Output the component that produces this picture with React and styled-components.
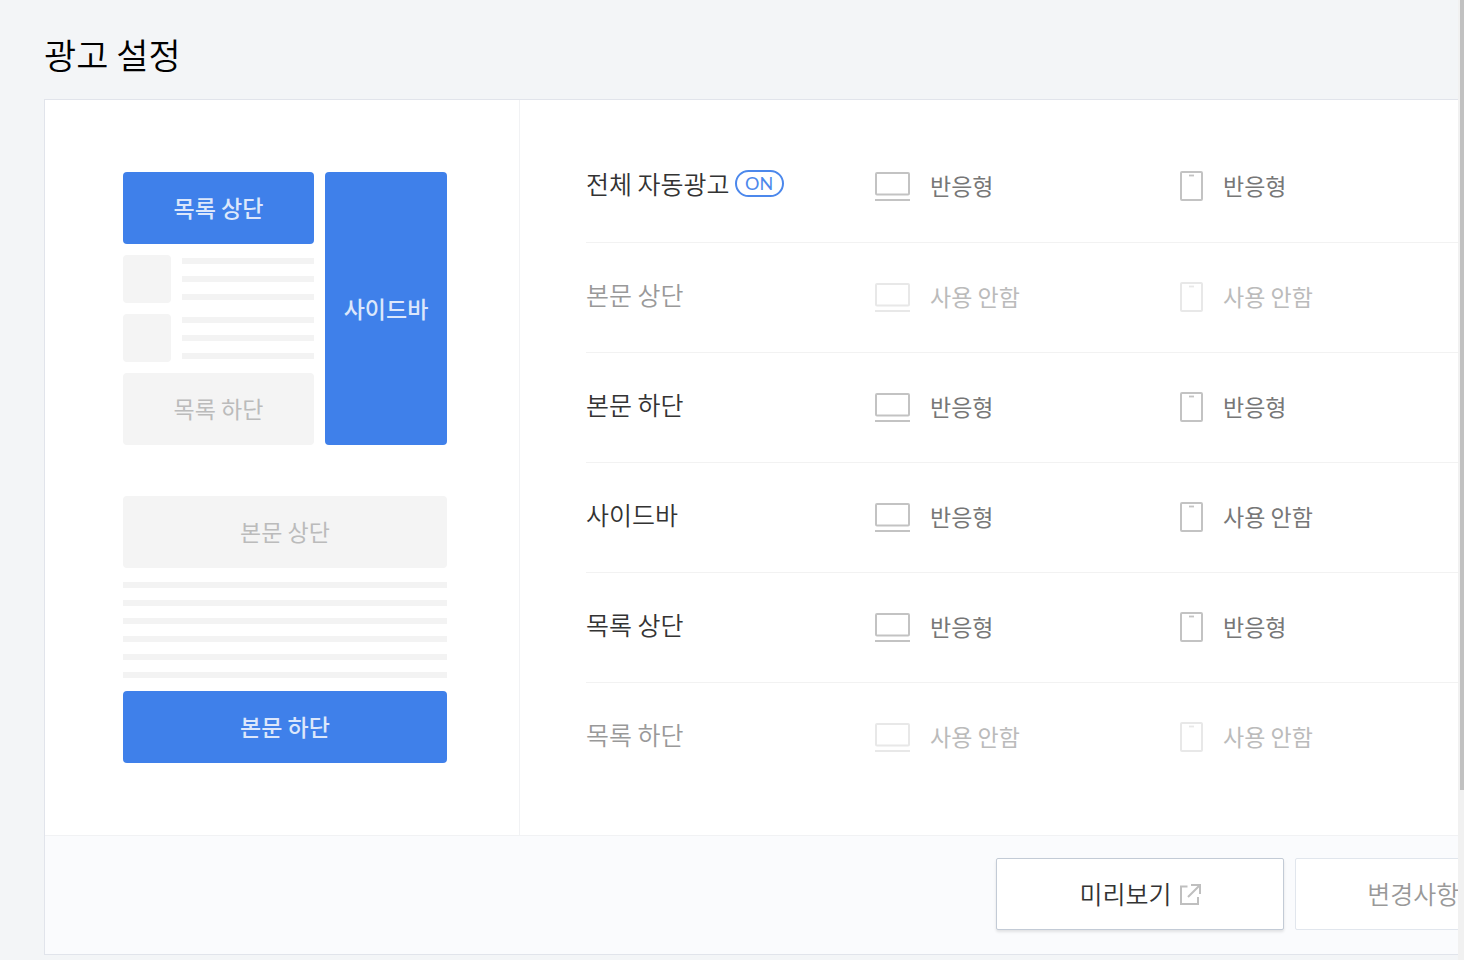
import React from "react";
import styled, { createGlobalStyle } from "styled-components";

const GlobalStyle = createGlobalStyle`
  *, *::before, *::after { box-sizing: border-box; }
  body {
    margin: 0;
    background: #f3f5f7;
    color: #000;
    font-family: "Noto Sans CJK KR", "Noto Sans", sans-serif;
    font-size: 23px;
  }
  button { font: inherit; }
`;

const Page = styled.div`
  display: flex;
  min-height: 100vh;
`;

const Main = styled.main`
  flex: 1;
  min-width: 0;
  overflow: hidden;
  padding: 28px 0 5px 44px;
`;

const ScrollTrack = styled.div`
  flex: none;
  width: 6px;
  padding-left: 2px;
  background: #f1f1f1;
`;

const ScrollThumb = styled.div`
  height: 790px;
  background: #c1c1c1;
`;

const Title = styled.h1`
  margin: 0 0 19px;
  font-size: 35px;
  font-weight: 350;
  line-height: 52px;
`;

/* The card runs on past the right edge of the visible area. */
const Card = styled.section`
  margin-right: -150px;
  border: 1px solid #e1e4eb;
  background: #fff;
`;

const CardBody = styled.div`
  display: flex;
`;

const Preview = styled.div`
  flex: none;
  display: flex;
  flex-direction: column;
  gap: 51px;
  padding: 72px 72px 72px 78px;
  border-right: 1px solid #f1f2f4;
`;

const ListLayout = styled.div`
  display: grid;
  grid-template-columns: 191px 122px;
  gap: 11px;
`;

const Stack = styled.div`
  display: flex;
  flex-direction: column;
  gap: ${(p) => p.$gap}px;
`;

const Slot = styled.div`
  display: flex;
  align-items: center;
  justify-content: center;
  min-height: 72px;
  padding-bottom: 2px;
  border-radius: 4px;
  line-height: 34px;
  background: ${(p) => (p.$on ? "#3f80ea" : "#f4f4f4")};
  color: ${(p) => (p.$on ? "#dce7fb" : "#bbb")};
  font-weight: ${(p) => (p.$on ? 500 : 400)};
`;

const Post = styled.div`
  display: grid;
  grid-template-columns: 48px 1fr;
  gap: 11px;
`;

const Thumb = styled.div`
  height: 48px;
  border-radius: 4px;
  background: #f4f4f4;
`;

const Lines = styled.div`
  display: flex;
  flex-direction: column;
  gap: 12px;
  padding: ${(p) => p.$pad};
`;

const Line = styled.div`
  height: 6px;
  background: #f3f3f3;
`;

const Settings = styled.div`
  flex: 1;
  min-width: 0;
  padding: 32px 0 0 66px;
`;

const Table = styled.table`
  width: 100%;
  table-layout: fixed;
  border-collapse: separate;
  border-spacing: 0;
`;

const Row = styled.tr`
  & > * {
    height: 110px;
    padding: 33px 0 0;
    border-bottom: 1px solid #f2f2f2;
    vertical-align: top;
    text-align: left;
  }
  &:first-child > * { height: 111px; }
  &:last-child > * { border-bottom: 0; }
`;

const NameCell = styled.th`
  width: 289px;
  color: ${(p) => (p.$off ? "#999" : "#333")};
  font-size: 25px;
  font-weight: 350;
  line-height: 36px;
`;

const Name = styled.div`
  display: flex;
  align-items: center;
  gap: 5px;
`;

const DeviceCell = styled.td`
  width: ${(p) => p.$width || "auto"};
`;

const Device = styled.div`
  display: flex;
  align-items: center;
  gap: 20px;
  line-height: 40px;
  color: ${(p) => (p.$off ? "#bbb" : "#777")};

  svg {
    margin-top: 2px;
    color: ${(p) => (p.$off ? "#e8e8e8" : "#c3c3c3")};
  }
`;

const Badge = styled.span`
  width: 49px;
  height: 27px;
  border: 2px solid #4c88ec;
  border-radius: 14px;
  color: #4c88ec;
  font-family: Lato, sans-serif;
  font-size: 18px;
  font-weight: 400;
  line-height: 23px;
  text-align: center;
`;

const Footer = styled.footer`
  display: flex;
  justify-content: flex-end;
  gap: 11px;
  padding: 22px 24px 24px;
  border-top: 1px solid #f1f2f4;
  background: #fafbfd;
`;

const Button = styled.button`
  display: flex;
  align-items: center;
  justify-content: center;
  gap: 8px;
  width: 288px;
  height: 72px;
  padding: 0 0 2px;
  border: 1px solid ${(p) => (p.$quiet ? "#e1e6ed" : "#c3cbd6")};
  border-radius: 2px;
  background: #fff;
  box-shadow: ${(p) => (p.$quiet ? "none" : "0 2px 3px rgba(0, 0, 0, 0.1)")};
  color: ${(p) => (p.$quiet ? "#999" : "#333")};
  font-size: 25px;
  font-weight: 350;
  line-height: 36px;

  svg { margin-top: 3px; }
`;

const MonitorIcon = () => (
  <svg width="35" height="29" viewBox="0 0 35 29" fill="none" stroke="currentColor" strokeWidth="2" role="img" aria-label="PC">
    <rect x="1" y="1" width="33" height="21.5" rx="1" />
    <path d="M0 28h35" />
  </svg>
);

const PhoneIcon = () => (
  <svg width="23" height="30" viewBox="0 0 23 30" fill="none" stroke="currentColor" strokeWidth="2" role="img" aria-label="모바일">
    <rect x="1" y="1" width="21" height="28" rx="1" />
    <path d="M9 4.5h5" strokeWidth="1.8" />
  </svg>
);

const ExternalIcon = () => (
  <svg width="21" height="21" viewBox="0 0 21 21" fill="none" stroke="#bfbfbf" strokeWidth="2" aria-hidden="true">
    <path d="M7.5 2.5H1V20h17v-7" />
    <path d="M11 1h9v9M20 1L8 13" />
  </svg>
);

const ROWS = [
  { name: "전체 자동광고", badge: "ON", pc: true, mobile: true },
  { name: "본문 상단", off: true, pc: false, mobile: false },
  { name: "본문 하단", pc: true, mobile: true },
  { name: "사이드바", pc: true, mobile: false },
  { name: "목록 상단", pc: true, mobile: true },
  { name: "목록 하단", off: true, pc: false, mobile: false },
];

const modeText = (on) => (on ? "반응형" : "사용 안함");

const PostPreview = () => (
  <Post>
    <Thumb />
    <Lines $pad="3px 0 0">
      {[0, 1, 2].map((i) => <Line key={i} />)}
    </Lines>
  </Post>
);

export default function App() {
  return (
    <Page>
      <GlobalStyle />
      <Main>
        <Title>광고 설정</Title>
        <Card>
          <CardBody>
            <Preview>
              <ListLayout>
                <Stack $gap={11}>
                  <Slot $on>목록 상단</Slot>
                  <PostPreview />
                  <PostPreview />
                  <Slot>목록 하단</Slot>
                </Stack>
                <Slot $on>사이드바</Slot>
              </ListLayout>
              <Stack $gap={0}>
                <Slot>본문 상단</Slot>
                <Lines $pad="14px 0 13px">
                  {[0, 1, 2, 3, 4, 5].map((i) => <Line key={i} />)}
                </Lines>
                <Slot $on>본문 하단</Slot>
              </Stack>
            </Preview>
            <Settings>
              <Table>
                <tbody>
                  {ROWS.map((row) => (
                    <Row key={row.name}>
                      <NameCell scope="row" $off={row.off}>
                        <Name>
                          {row.name}
                          {row.badge && <Badge>{row.badge}</Badge>}
                        </Name>
                      </NameCell>
                      <DeviceCell $width="305px">
                        <Device $off={row.off}>
                          <MonitorIcon />
                          {modeText(row.pc)}
                        </Device>
                      </DeviceCell>
                      <DeviceCell>
                        <Device $off={row.off}>
                          <PhoneIcon />
                          {modeText(row.mobile)}
                        </Device>
                      </DeviceCell>
                    </Row>
                  ))}
                </tbody>
              </Table>
            </Settings>
          </CardBody>
          <Footer>
            <Button type="button">
              미리보기
              <ExternalIcon />
            </Button>
            <Button type="button" $quiet>변경사항 저장</Button>
          </Footer>
        </Card>
      </Main>
      <ScrollTrack aria-hidden="true">
        <ScrollThumb />
      </ScrollTrack>
    </Page>
  );
}
